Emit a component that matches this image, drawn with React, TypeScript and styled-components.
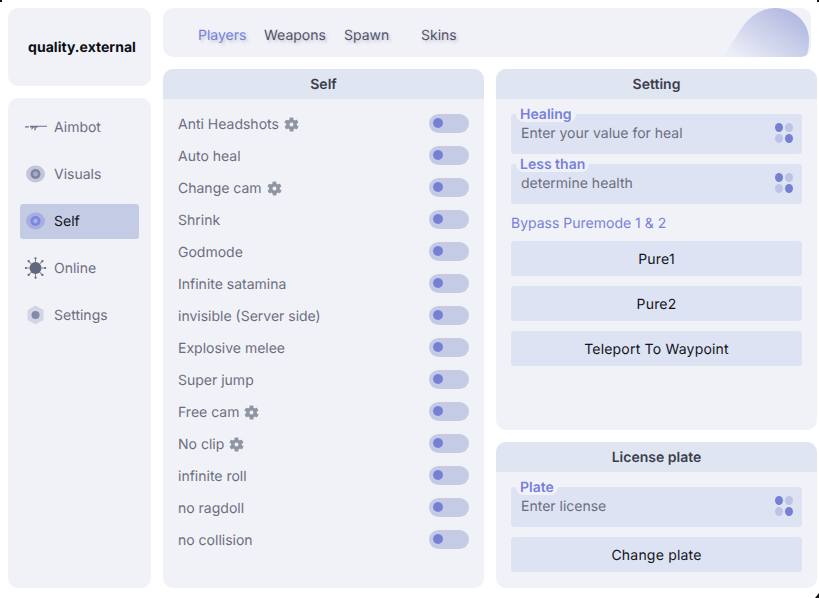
import React from "react";
import styled, { createGlobalStyle } from "styled-components";

const Global = createGlobalStyle`
  html, body { margin: 0; padding: 0; background: #fff; }
  body { font-family: Inter, "Liberation Sans", sans-serif; text-rendering: geometricPrecision; }
  * { box-sizing: border-box; }
`;

const Page = styled.div`
  position: relative; width: 819px; height: 598px; padding: 8px 2px 10px 8px;
  display: grid; grid-template-columns: 143px 1fr; column-gap: 12px; overflow: hidden;
`;
const Speck = styled.i<{ $css: string }>`
  position: absolute; background: #111; ${p => p.$css}
`;
const Side = styled.aside`display: flex; flex-direction: column; gap: 12px; min-height: 0;`;
const Card = styled.div`background: #f1f2f8; border-radius: 10px;`;
const Logo = styled(Card)`
  height: 78px; display: flex; align-items: center; justify-content: center; padding-left: 5px;
  font-size: 14px; font-weight: 700; color: #0c0d14; letter-spacing: .03px;
`;
const Nav = styled(Card)`flex: 1; padding: 12px 12px; display: flex; flex-direction: column; gap: 12px;`;
const NavItem = styled.div<{ $active?: boolean }>`
  height: 35px; display: flex; align-items: center; gap: 7px; padding: 0 0 1px 5px; border-radius: 3px;
  font-size: 14px; color: ${p => p.$active ? "#12131c" : "#6c6e82"};
  background: ${p => p.$active ? "#c3cce4" : "transparent"};
`;
const NavIcon = styled.svg`width: 22px; height: 22px; flex: none;`;
const Main = styled.main`
  display: grid; grid-template-columns: 321px 321px; grid-template-rows: 49px 361px 146px;
  column-gap: 12px; row-gap: 12px; min-width: 0;
`;
const Top = styled(Card)`
  grid-column: 1 / 3; width: 648px; position: relative; overflow: hidden;
  display: flex; align-items: center; padding: 6px 0 0 35px; font-size: 14px;
`;
const Tab = styled.span<{ $w: number; $active?: boolean }>`
  width: ${p => p.$w}px; color: ${p => p.$active ? "#7480dc" : "#52536a"};
  text-shadow: 2px 2px 3px rgba(90, 90, 120, .28);
`;
const Blob = styled.div`
  position: absolute; right: 2px; top: 0; width: 86px; height: 49px;
  background: linear-gradient(215deg, #aeb5df 8%, #eceef7 92%);
  clip-path: path("M0 49 L20 18 C28 7 40 0 52 0 C72 0 86 15 86 32 C86 39 85 44 83 49 Z");
`;
const Panel = styled(Card)<{ $row?: string; $col?: string }>`
  grid-row: ${p => p.$row}; grid-column: ${p => p.$col}; overflow: hidden; display: flex; flex-direction: column;
`;
const Head = styled.div`
  height: 30px; flex: none; background: #e0e5f2; display: flex; align-items: center; justify-content: center;
  font-size: 14px; font-weight: 600; color: #3b3d4d;
`;
const List = styled.div`padding: 8px 15px 0; display: flex; flex-direction: column;`;
const Row = styled.div`
  height: 32px; display: flex; align-items: center; justify-content: space-between;
  font-size: 14px; color: #6c6e80;
`;
const Label = styled.span`display: flex; align-items: center; gap: 4px; padding-top: 2px;`;
const Gear = styled.svg`width: 17px; height: 17px; fill: #8f95a3; flex: none;`;
const Switch = styled.span`
  width: 40px; height: 19px; border-radius: 10px; background: #c3cce4; display: flex; align-items: center; padding-left: 4px;
  &::before { content: ""; width: 10px; height: 10px; border-radius: 50%; background: #7780d2; margin-top: -1px; }
`;
const Body = styled.div`padding: 15px 15px 0; display: flex; flex-direction: column;`;
const Field = styled.div`
  position: relative; height: 40px; background: #dee3f3; border-radius: 3px; margin-bottom: 10px;
  display: flex; align-items: center; justify-content: space-between; padding: 0 9px 2px 10px;
  font-size: 14px; color: #6c6e80;
`;
const Legend = styled.span`
  position: absolute; left: 5px; top: -7px; height: 15px; padding: 0 4px; line-height: 15px;
  background: #f1f2f8; border-radius: 0 0 8px 8px; font-size: 14px; font-weight: 600; color: #7781d8;
`;
const Dots = styled.span`
  display: grid; grid-template-columns: 8px 8px; gap: 2px;
`;
const Dot = styled.i<{ $on: boolean }>`
  width: 8px; height: 9px; border-radius: 50%; background: ${p => p.$on ? "#7580d3" : "#bcc3e7"};
`;
const Bypass = styled.div`font-size: 14px; color: #7781d8; height: 17px; line-height: 19px; margin: 0 0 10px; `;
const Btn = styled.div`
  height: 35px; background: #dee3f3; border-radius: 3px; margin-bottom: 10px; padding-top: 2px;
  display: flex; align-items: center; justify-content: center; font-size: 14px; letter-spacing: .2px; color: #12131c;
`;
const Soft = styled.g`filter: blur(0.55px);`;

const gear = "M19.400 13c.1-.3.1-.7.1-1s0-.7-.1-1l2.100-1.600c.2-.2.2-.4.1-.6l-2-3.400c-.1-.2-.4-.3-.6-.2l-2.500 1a7 7 0 0 0-1.700-1l-.4-2.700c0-.2-.2-.4-.5-.4h-4c-.3 0-.5.2-.5.4l-.4 2.700a7 7 0 0 0-1.700 1l-2.500-1c-.2-.1-.5 0-.6.2l-2 3.400c-.1.2-.1.4.1.6L4.600 11c-.1.3-.1.7-.1 1s0 .7.1 1l-2.100 1.600c-.2.2-.2.4-.1.6l2 3.400c.1.2.4.3.6.2l2.500-1a7 7 0 0 0 1.700 1l.4 2.700c0 .2.2.4.5.4h4c.3 0 .5-.2.5-.4l.4-2.700a7 7 0 0 0 1.700-1l2.500 1c.2.1.5 0 .6-.2l2-3.400c.1-.2.1-.4-.1-.6L19.400 13zM12 14.800a2.800 2.800 0 1 1 0-5.600 2.800 2.800 0 0 1 0 5.600z";

const GearIcon = () => <Gear viewBox="0 0 24 24"><path d={gear} /></Gear>;
const FieldDots = () => <Dots><Dot $on /><Dot $on={false} /><Dot $on={false} /><Dot $on /></Dots>;

const Ring = ({ o, m, c }: { o: string; m: string; c: string }) => (
  <NavIcon viewBox="0.5 0 22 22">
    <Soft>
      <ellipse cx="11" cy="11" rx="9.500" ry="8.500" fill={o} />
      <circle cx="11" cy="11" r="5" fill={m} />
      <circle cx="11" cy="11" r="2.400" fill={c} />
    </Soft>
  </NavIcon>
);

const items: [string, boolean][] = [
  ["Anti Headshots", true], ["Auto heal", false], ["Change cam", true], ["Shrink", false], ["Godmode", false],
  ["Infinite satamina", false], ["invisible (Server side)", false], ["Explosive melee", false], ["Super jump", false],
  ["Free cam", true], ["No clip", true], ["infinite roll", false], ["no ragdoll", false], ["no collision", false],
];

export default function App() {
  return (
    <Page>
      <Global />
      <Speck $css="left: 0; top: 0; width: 2px; height: 2px;" />
      <Speck $css="right: 0; top: 0; width: 2px; height: 2px;" />
      <Speck $css="right: 0; bottom: 0; width: 4px; height: 5px; clip-path: polygon(100% 0, 100% 100%, 0 100%);" />
      <Side>
        <Logo>quality.external</Logo>
        <Nav>
          <NavItem>
            <NavIcon viewBox="0 0 22 22" fill="#6f7391">
              <path d="M0 10.200h4v1.200H0zM5 9.800h17v1H13.500l-1.200.6-1.300 0-.4 2.800H9.300l.2-2.800H8.400l-1.300 2.100H6l1-2.100H5z" />
            </NavIcon>
            Aimbot
          </NavItem>
          <NavItem><Ring o="#c3c6d9" m="#7f84a3" c="#a9acc3" />Visuals</NavItem>
          <NavItem $active><Ring o="#a7afe2" m="#7a85dc" c="#a5aee6" />Self</NavItem>
          <NavItem>
            <NavIcon viewBox="0.5 0 22 22" fill="#62677f">
              <circle cx="11" cy="11" r="6" />
              {[0, 45, 90, 135, 180, 225, 270, 315].map(a => (
                <g key={a} transform={`rotate(${a} 11 11)`}>
                  <rect x="10.600" y="1" width=".8" height="4" />
                  <circle cx="11" cy="1.300" r="1.100" />
                </g>
              ))}
            </NavIcon>
            Online
          </NavItem>
          <NavItem>
            <NavIcon viewBox="0.5 0 22 22">
              <Soft>
                <polygon points="11,1.500 19,6 19,16 11,20.500 3,16 3,6" fill="#d2d5e6" />
                <circle cx="11" cy="11" r="4" fill="#858aa8" />
              </Soft>
            </NavIcon>
            Settings
          </NavItem>
        </Nav>
      </Side>
      <Main>
        <Top>
          <Tab $w={66} $active>Players</Tab>
          <Tab $w={80}>Weapons</Tab>
          <Tab $w={77}>Spawn</Tab>
          <Tab $w={50}>Skins</Tab>
          <Blob />
        </Top>
        <Panel $row="2 / 4" $col="1">
          <Head>Self</Head>
          <List>
            {items.map(([t, g]) => (
              <Row key={t}>
                <Label>{t}{g && <GearIcon />}</Label>
                <Switch />
              </Row>
            ))}
          </List>
        </Panel>
        <Panel $row="2" $col="2">
          <Head>Setting</Head>
          <Body>
            <Field><Legend>Healing</Legend>Enter your value for heal<FieldDots /></Field>
            <Field><Legend>Less than</Legend>determine health<FieldDots /></Field>
            <Bypass>Bypass Puremode 1 &amp; 2</Bypass>
            <Btn>Pure1</Btn>
            <Btn>Pure2</Btn>
            <Btn>Teleport To Waypoint</Btn>
          </Body>
        </Panel>
        <Panel $row="3" $col="2">
          <Head>License plate</Head>
          <Body>
            <Field><Legend>Plate</Legend>Enter license<FieldDots /></Field>
            <Btn>Change plate</Btn>
          </Body>
        </Panel>
      </Main>
    </Page>
  );
}
